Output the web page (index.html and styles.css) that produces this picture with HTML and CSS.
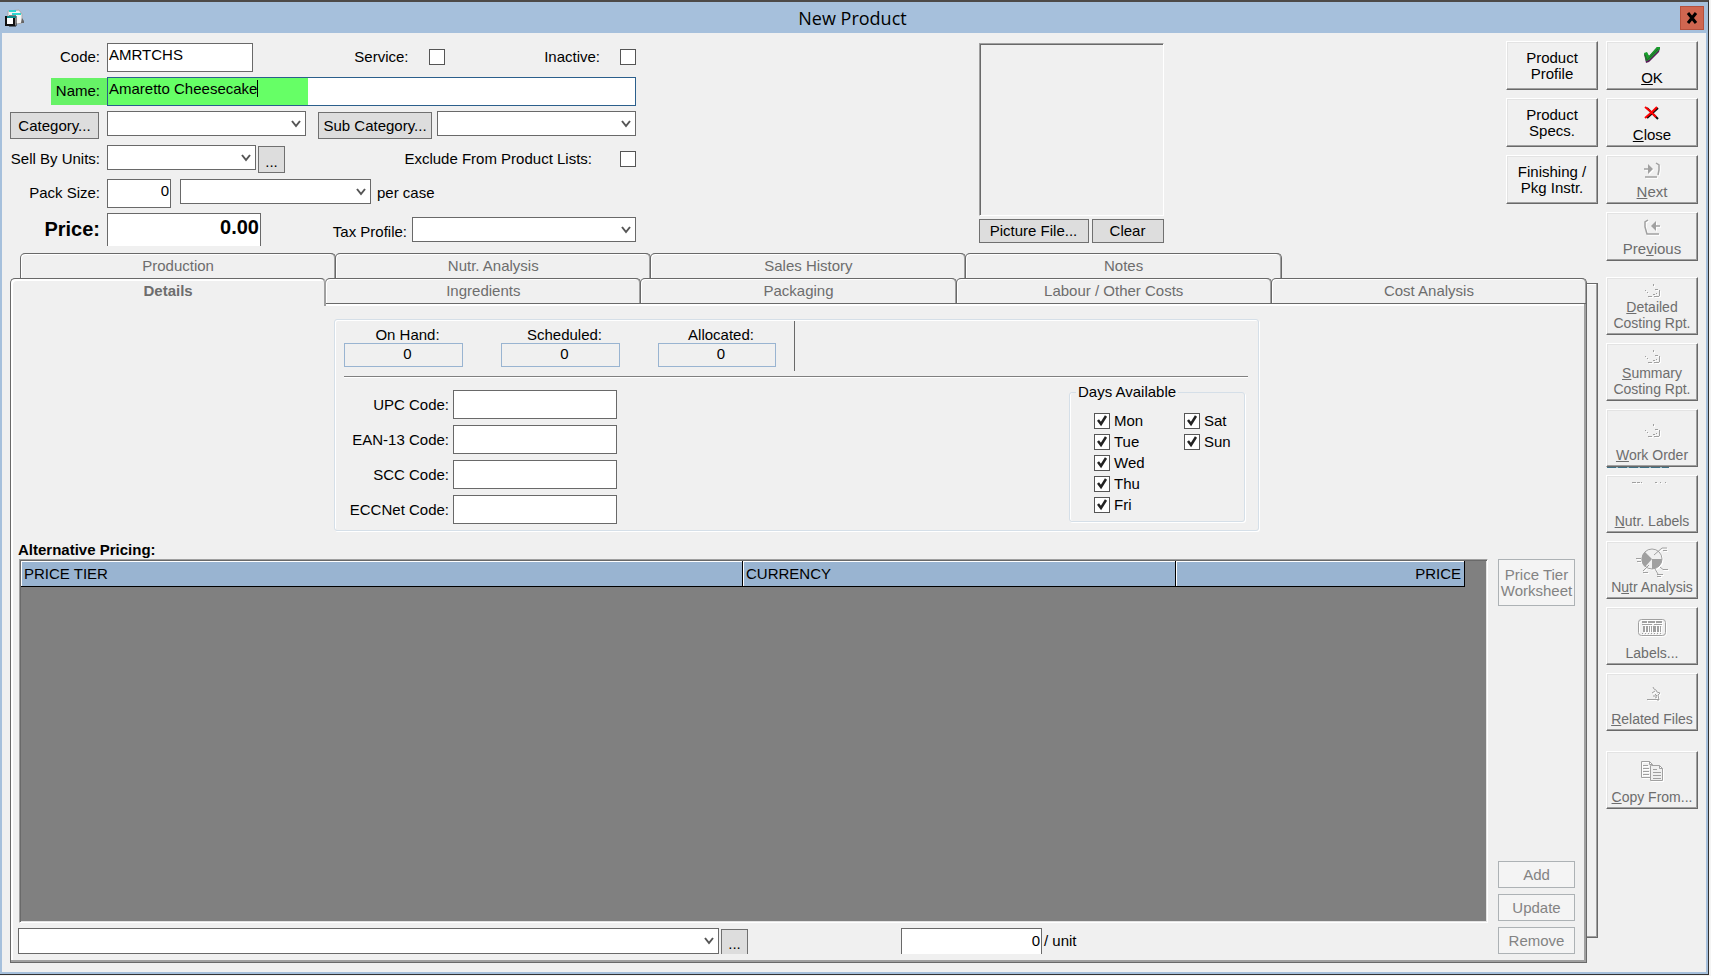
FILE: index.html
```html
<!DOCTYPE html>
<html lang="en">
<head>
  <meta charset="UTF-8">
  <meta name="viewport" content="width=device-width, initial-scale=1.0">
  <title>New Product</title>
  <link rel="stylesheet" href="styles.css">
</head>
<body>
  <div class="window">
    <header class="titlebar">
      <svg class="app-icon" width="20" height="18" viewBox="0 0 20 18">
        <path d="M3 2l11-1 3 4v9l-5 1-9-3z" fill="#f4f4f4" stroke="#a9a9a9"/>
        <path d="M4 2h7M7 5h9" stroke="#2fd5d0" stroke-width="2"/>
        <path d="M17 9l2 3v2h-3z" fill="#666"/>
        <path d="M4 7h7v10H4z" fill="#fff" stroke="#111"/>
        <path d="M1 8h8v8H1z" fill="#fff" stroke="#111" stroke-width="2"/>
        <path d="M2 8h9" stroke="#0b8c8c" stroke-width="2"/>
      </svg>
      <h1>New Product</h1>
      <button class="window-close" aria-label="Close window">
        <svg width="12" height="12" viewBox="0 0 12 12"><path d="M2 1l8 10M10 1L2 11" stroke="#000" stroke-width="3"/></svg>
      </button>
    </header>

    <div class="content">
      <main class="main">
        <div class="top">
          <form class="product-form">
            <div class="row">
              <label class="lead" for="code">Code:</label>
              <input type="text" class="w-code" id="code" value="AMRTCHS">
              <label class="fill" for="service">Service:</label>
              <input type="checkbox" class="gap-check" id="service">
              <label class="fill" for="inactive">Inactive:</label>
              <input type="checkbox" class="gap-check" id="inactive">
            </div>
            <div class="row">
              <label class="lead" for="name"><span class="mark">Name:</span></label>
              <input type="text" class="name" id="name" value="Amaretto Cheesecake">
            </div>
            <div class="row">
              <button type="button" class="btn w-category">Category...</button>
              <select class="w-list" aria-label="Category"><option></option></select>
              <button type="button" class="btn w-sub">Sub Category...</button>
              <select class="w-list" aria-label="Sub Category"><option></option></select>
            </div>
            <div class="row">
              <label class="lead" for="units">Sell By Units:</label>
              <select class="w-units" id="units"><option></option></select>
              <button type="button" class="btn dots">...</button>
              <label class="fill" for="exclude">Exclude From Product Lists:</label>
              <input type="checkbox" class="gap-exclude" id="exclude">
            </div>
            <div class="row">
              <label class="lead" for="pack">Pack Size:</label>
              <input type="text" class="w-pack number" id="pack" value="0">
              <select class="w-case" id="case"><option></option></select>
              <label class="after" for="case">per case</label>
            </div>
            <div class="row">
              <label class="lead price-label" for="price">Price:</label>
              <input type="text" class="price number" id="price" value="0.00">
              <label class="fill tax-label" for="tax">Tax Profile:</label>
              <select class="w-tax" id="tax"><option></option></select>
            </div>
          </form>

          <div class="picture">
            <div class="picture-box"></div>
            <div class="picture-buttons">
              <button class="btn grow">Picture File...</button>
              <button class="btn w-clear">Clear</button>
            </div>
          </div>

          <div class="raised-column">
            <button class="raised">Product<br>Profile</button>
            <button class="raised">Product<br>Specs.</button>
            <button class="raised">Finishing /<br>Pkg Instr.</button>
          </div>
        </div>

        <div class="tab-area">
          <div class="tabs">
            <nav class="tab-row back">
              <button class="tab">Production</button>
              <button class="tab">Nutr. Analysis</button>
              <button class="tab">Sales History</button>
              <button class="tab">Notes</button>
            </nav>
            <nav class="tab-row">
              <button class="tab active">Details</button>
              <button class="tab">Ingredients</button>
              <button class="tab">Packaging</button>
              <button class="tab">Labour / Other Costs</button>
              <button class="tab">Cost Analysis</button>
            </nav>

            <section class="panel">
              <div class="details">
                <div class="stock">
                  <div class="stock-item"><label for="on-hand">On Hand:</label><output id="on-hand">0</output></div>
                  <div class="stock-item"><label for="scheduled">Scheduled:</label><output id="scheduled">0</output></div>
                  <div class="stock-item"><label for="allocated">Allocated:</label><output id="allocated">0</output></div>
                </div>
                <div class="codes-and-days">
                  <div class="codes">
                    <label for="upc">UPC Code:</label><input type="text" id="upc">
                    <label for="ean">EAN-13 Code:</label><input type="text" id="ean">
                    <label for="scc">SCC Code:</label><input type="text" id="scc">
                    <label for="eccnet">ECCNet Code:</label><input type="text" id="eccnet">
                  </div>
                  <fieldset class="days">
                    <legend>Days Available</legend>
                    <label><input type="checkbox" checked>Mon</label>
                    <label><input type="checkbox" checked>Tue</label>
                    <label><input type="checkbox" checked>Wed</label>
                    <label><input type="checkbox" checked>Thu</label>
                    <label><input type="checkbox" checked>Fri</label>
                    <label><input type="checkbox" checked>Sat</label>
                    <label><input type="checkbox" checked>Sun</label>
                  </fieldset>
                </div>
              </div>

              <h2>Alternative Pricing:</h2>
              <div class="pricing">
                <div class="pricing-main">
                  <div class="grid-box">
                    <table>
                      <thead>
                        <tr><th class="col-tier">PRICE TIER</th><th class="col-currency">CURRENCY</th><th class="col-price">PRICE</th></tr>
                      </thead>
                    </table>
                  </div>
                  <div class="entry">
                    <select class="w-tier" aria-label="Price tier"><option></option></select>
                    <button class="btn dots">...</button>
                    <input type="text" class="unit-price number" id="unit-price" value="0">
                    <label for="unit-price">/ unit</label>
                  </div>
                </div>
                <div class="pricing-buttons">
                  <button class="flat worksheet" disabled>Price Tier<br>Worksheet</button>
                  <button class="flat" disabled>Add</button>
                  <button class="flat" disabled>Update</button>
                  <button class="flat" disabled>Remove</button>
                </div>
              </div>
            </section>
          </div>
          <div class="page-edge"></div>
        </div>
      </main>

      <aside class="sidebar">
        <button class="raised">
          <svg width="34" height="24" viewBox="0 0 34 24">
            <path d="M9 8l3-1 2 3 8-9 3 1-1 4-10 10-3 1z" fill="#5a1c5a"/>
            <path d="M9 7l3-1 2 4 8-9h3v2L14 14l-3 1z" fill="#16a02a"/>
            <path d="M10 9l2 5 11-11" fill="none" stroke="#2a5c30"/>
          </svg>
          <span><u>O</u>K</span>
        </button>
        <button class="raised">
          <svg width="34" height="24" viewBox="0 0 34 24">
            <path d="M12 5l11 11M23 5L12 15" stroke="#111" stroke-width="2" fill="none"/>
            <path d="M10 4l5 4 6 6M22 4l-5 5-7 6" stroke="#f00" stroke-width="2" fill="none"/>
          </svg>
          <span><u>C</u>lose</span>
        </button>
        <button class="raised" disabled>
          <svg width="34" height="24" viewBox="0 0 34 24">
            <path d="M9 9h5M21 3l3 2v5l-1 5M10 17h12" stroke="#a0a0a0" stroke-width="1.500" fill="none"/>
            <path d="M13 4l5 5-5 5z" fill="#a0a0a0"/>
          </svg>
          <span><u>N</u>ext</span>
        </button>
        <button class="raised" disabled>
          <svg width="34" height="24" viewBox="0 0 34 24">
            <path d="M25 9h-5M13 3l-3 2v5l2 7h12" stroke="#a0a0a0" stroke-width="1.500" fill="none"/>
            <path d="M21 4l-5 5 5 5z" fill="#a0a0a0"/>
          </svg>
          <span>Pre<u>v</u>ious</span>
        </button>

        <button class="raised tall section" disabled>
          <svg width="34" height="16" viewBox="0 0 34 16">
            <path d="M18.500 1v2M10 7.500h1M12 9.500h1M20 6.500h3M24.500 7v6M18 11.500h2M13 13.500h4M19 13.500h5M21 10.500h1" stroke="#a0a0a0" fill="none"/>
          </svg>
          <span><u>D</u>etailed<br>Costing Rpt.</span>
        </button>
        <button class="raised tall" disabled>
          <svg width="34" height="16" viewBox="0 0 34 16">
            <path d="M18.500 1v2M10 7.500h1M12 9.500h1M20 6.500h3M24.500 7v6M18 11.500h2M13 13.500h4M19 13.500h5M21 10.500h1" stroke="#a0a0a0" fill="none"/>
          </svg>
          <span><u>S</u>ummary<br>Costing Rpt.</span>
        </button>
        <button class="raised tall leftover" disabled>
          <svg width="34" height="32" viewBox="0 0 34 32">
            <path d="M18.500 9v2M10 15.500h1M12 17.500h1M20 14.500h3M24.500 15v6M18 19.500h2M13 21.500h4M19 21.500h5M21 18.500h1" stroke="#a0a0a0" fill="none"/>
          </svg>
          <span><u>W</u>ork Order</span>
        </button>
        <button class="raised tall" disabled>
          <svg width="40" height="32" viewBox="0 0 40 32">
            <path d="M0 1.500h4M5 1.500h3M9 1.500h1M23 1.500h2M28 1.500h1M33 1.500h1" stroke="#a0a0a0" fill="none"/>
          </svg>
          <span><u>N</u>utr. Labels</span>
        </button>
        <button class="raised tall" disabled>
          <svg width="34" height="32" viewBox="0 0 34 32">
            <circle cx="17" cy="12" r="10" fill="#f0f0f0" stroke="#a0a0a0"/>
            <path d="M17 12L10 5a10 10 0 0 0 0 15zM17 12h10a10 10 0 0 1-10 10z" fill="#a0a0a0"/>
            <path d="M19 8l8-7h5M28 3.500h4M1 11.500h5M2 14.500h4M14 18l-6 6M8 25.500h5M25 20l3 2.500h5M20 22l3 5M22 27.500h6M22 29.500h4" stroke="#a0a0a0" fill="none"/>
          </svg>
          <span>N<u>u</u>tr Analysis</span>
        </button>
        <button class="raised tall" disabled>
          <svg width="34" height="32" viewBox="0 0 34 32">
            <rect x="3.500" y="6.500" width="27" height="16" rx="3" fill="none" stroke="#a0a0a0"/>
            <path d="M7 9h5M13 9h7M21 9h6" stroke="#a0a0a0" stroke-width="2"/>
            <path d="M7 11.500h10M19 11.500h8M7 20.500h1M10 20.500h1M13 20.500h1M16 20.500h1M19 20.500h1M22 20.500h1M25 20.500h1" stroke="#a0a0a0"/>
            <path d="M9 13v6M12 13v6M20 13v6M23 13v6" stroke="#a0a0a0" stroke-width="2"/>
            <path d="M14.500 13v6M16.500 13v6M18.500 13v6M25.500 13v6" stroke="#a0a0a0"/>
          </svg>
          <span>Labels...</span>
        </button>
        <button class="raised tall" disabled>
          <svg width="34" height="32" viewBox="0 0 34 32">
            <path d="M18 8l1 2 2 1 1 2 3 1-2 2 1 5h-2M17 14l3-2M18 17h4l-2-2M20 19l2-1M12 20.500h12" stroke="#a0a0a0" fill="none"/>
          </svg>
          <span><u>R</u>elated Files</span>
        </button>
        <button class="raised tall copy" disabled>
          <svg width="34" height="32" viewBox="0 0 34 32">
            <path d="M6.500 4.500h8l3 3v13h-11zM14.500 4.500v3h3M8 8.500h5M8 11.500h6M8 14.500h6M8 17.500h6" fill="none" stroke="#a0a0a0"/>
            <path d="M16.500 8.500h8l3 3v12h-12v-15zM24.500 8.500v3h3" fill="#f0f0f0" stroke="#a0a0a0"/>
            <path d="M18 12.500h4M18 15.500h8M18 18.500h8M18 21.500h8" stroke="#a0a0a0"/>
          </svg>
          <span><u>C</u>opy From...</span>
        </button>
      </aside>
    </div>
  </div>
</body>
</html>
```
FILE: styles.css
```css
* {
  box-sizing: border-box;
}
body {
  margin: 0;
  background: #f4f4f4;
  color: #000;
  font: 15px/16px "Liberation Sans", Arial, sans-serif;
}
button, input, select {
  font: inherit;
  color: inherit;
  margin: 0;
  border-radius: 0;
}
button {
  padding: 0;
}

/* window frame */
.window {
  display: flex;
  flex-direction: column;
  min-height: calc(100vh - 1px);
  margin-right: 2px;
  border: 1px solid #333;
  border-top: 2px solid #4d4a48;
  border-left: 0;
  background: #f0f0f0;
}
.titlebar {
  display: flex;
  align-items: center;
  height: 31px;
  padding: 0 4px 0 5px;
  background: #a6c0dc;
}
.titlebar h1 {
  flex: 1;
  margin: 0;
  font: 18px/30px "Open Sans", "Noto Sans", sans-serif;
  text-align: center;
}
.window-close {
  display: flex;
  align-items: center;
  justify-content: center;
  width: 24px;
  height: 24px;
  border: 1px solid #b5503c;
  background: #cf6650;
}
.content {
  flex: 1;
  display: flex;
  gap: 8px;
  padding: 8px 8px 9px;
  border: 2px solid #a6c0dc;
  border-top: 0;
}
.main {
  flex: 1;
  display: flex;
  flex-direction: column;
  min-width: 0;
}
.top {
  display: flex;
  justify-content: space-between;
  height: 212px;
}

/* text boxes and lists */
input[type="text"] {
  height: 29px;
  padding: 0 1px 7px;
  border: 1px solid #696969;
  background: #fff;
}
input.number {
  text-align: right;
}
select {
  appearance: none;
  height: 25px;
  border: 1px solid #696969;
  background: #fff url("data:image/svg+xml,%3Csvg xmlns='http://www.w3.org/2000/svg' width='10' height='8'%3E%3Cpath d='M1 1l4 5 4-5' fill='none' stroke='%23555' stroke-width='2'/%3E%3C/svg%3E") no-repeat right 4px center;
}
input[type="checkbox"] {
  appearance: none;
  flex: none;
  width: 16px;
  height: 16px;
  border: 1px solid #555;
  background: #fff;
}
input[type="checkbox"]:checked {
  background: #fff url("data:image/svg+xml,%3Csvg xmlns='http://www.w3.org/2000/svg' width='14' height='14'%3E%3Cpath d='M3 6l3 4 5-8' fill='none' stroke='%23222' stroke-width='2.5'/%3E%3C/svg%3E");
}

/* buttons */
.btn {
  border: 1px solid #707070;
  background: #ddd;
}
.raised {
  display: flex;
  flex-direction: column;
  align-items: center;
  justify-content: center;
  width: 92px;
  height: 49px;
  border: 1px solid;
  border-color: #fff #696969 #696969 #fff;
  background: #f0f0f0;
  box-shadow: inset -1px -1px #a0a0a0, inset 1px 1px #e3e3e3;
}
.raised:disabled {
  color: #6d6d6d;
}
.raised:disabled svg {
  filter: drop-shadow(1px 1px 0 #fff);
}
.flat {
  height: 27px;
  border: 1px solid #adb2b5;
  background: #f4f4f4;
  color: #838383;
}

/* product form */
.product-form {
  width: 626px;
  padding-top: 2px;
}
.row {
  display: flex;
  align-items: flex-start;
  height: 34px;
}
.row label {
  padding-top: 4px;
  line-height: 20px;
  white-space: nowrap;
}
.row .lead {
  width: 97px;
  padding-right: 7px;
  text-align: right;
}
.row .fill {
  flex: 1;
  text-align: right;
}
.row .after {
  padding-left: 6px;
}
.row .btn {
  height: 27px;
  margin-top: 1px;
}
.row input[type="checkbox"] {
  margin-top: 6px;
}
.row .gap-check {
  margin-left: 20px;
}
.row .gap-exclude {
  margin-left: 28px;
}
.row .lead:has(.mark) {
  padding: 1px 0 0;
}
.mark {
  display: inline-block;
  padding: 3px 7px 4px 5px;
  background: #66f266;
}
input.name {
  width: 529px;
  border-color: #2b5f8c;
  background: linear-gradient(#000, #000) 149px 2px / 1px 17px no-repeat, linear-gradient(90deg, #66ff66 200px, #fff 200px);
}
.w-code {
  width: 146px;
}
.w-category {
  width: 89px;
  margin-right: 8px;
}
.w-list {
  width: 199px;
}
.w-sub {
  width: 114px;
  margin: 0 5px 0 12px;
}
.w-units {
  width: 149px;
}
.btn.dots {
  width: 27px;
  margin-left: 2px;
  padding-top: 4px;
}
.w-pack {
  width: 64px;
}
.w-case {
  width: 191px;
  margin-left: 9px;
}
.row .price-label {
  padding-top: 6px;
  font-size: 20px;
  font-weight: bold;
}
.row .price {
  width: 154px;
  height: 33px;
  padding-bottom: 5px;
  border-bottom: 0;
  font-size: 20px;
  font-weight: bold;
}
.row .tax-label {
  padding-top: 9px;
}
.w-tax {
  width: 224px;
  margin: 4px 0 0 5px;
}

/* picture */
.picture {
  width: 185px;
  padding-top: 2px;
}
.picture-box {
  height: 173px;
  margin-bottom: 3px;
  border: 1px solid;
  border-color: #a0a0a0 #fff #fff #a0a0a0;
  box-shadow: inset 1px 1px #696969;
}
.picture-buttons {
  display: flex;
  gap: 3px;
  height: 24px;
}
.grow {
  flex: 1;
}
.w-clear {
  width: 72px;
}
.raised-column {
  display: flex;
  flex-direction: column;
  gap: 8px;
}

/* tabs */
.tab-area {
  flex: 1;
  display: flex;
}
.tabs {
  flex: 1;
  display: flex;
  flex-direction: column;
}
.page-edge {
  width: 11px;
  margin: 30px 0 25px;
  border: 1px solid #696969;
  border-left: 0;
  box-shadow: inset -1px -1px #a0a0a0, inset 0 1px #fff;
}
.tab-row {
  display: flex;
  height: 25px;
}
.tab-row.back {
  width: 80%;
  margin-left: 10px;
}
.tab {
  flex: 1;
  margin-left: -1px;
  border: 1px solid #696969;
  border-bottom: 0;
  border-radius: 5px 5px 0 0;
  background: #f0f0f0;
  box-shadow: inset -1px 0 #a0a0a0, inset 1px 1px #fff;
  color: #6d6d6d;
}
.tab:first-child {
  margin-left: 0;
}
.tab.active {
  z-index: 1;
  margin-bottom: -3px;
  padding-bottom: 4px;
  border-right-color: #a0a0a0;
  box-shadow: inset -1px 0 #a0a0a0, inset 2px 2px #fff;
  font-weight: bold;
}
.panel {
  flex: 1;
  display: flex;
  flex-direction: column;
  padding: 15px 11px 8px 7px;
  border: 1px solid #696969;
  box-shadow: inset -2px -2px #a0a0a0, inset 2px 2px #fff;
}

/* details group */
.details {
  width: 925px;
  height: 212px;
  margin: 0 auto;
  padding: 1px 10px 0 9px;
  border: 1px solid #d5dfe8;
  border-radius: 3px;
  box-shadow: inset 1px 1px #fff, 1px 1px #fff;
}
.stock {
  display: flex;
  gap: 38px;
  height: 56px;
  border-bottom: 1px solid #808080;
  box-shadow: 0 1px #fff;
}
.stock-item {
  width: 119px;
  padding-top: 5px;
  text-align: center;
}
.stock-item:last-child {
  width: 137px;
  height: 50px;
  padding-right: 18px;
  border-right: 1px solid #696969;
}
.stock-item label {
  display: block;
  padding-left: 8px;
  line-height: 17px;
}
.stock-item output {
  display: block;
  height: 24px;
  padding-left: 8px;
  border: 1px solid #99b4d1;
  line-height: 20px;
}
.codes-and-days {
  display: flex;
  justify-content: space-between;
}
.codes {
  display: grid;
  grid-template-columns: 105px 164px;
  column-gap: 4px;
  row-gap: 6px;
  align-content: start;
  align-items: center;
  padding-top: 13px;
  text-align: right;
}
.days {
  display: grid;
  grid-template-rows: repeat(5, 16px);
  grid-auto-flow: column;
  grid-template-columns: 90px 60px;
  row-gap: 5px;
  width: 176px;
  height: 138px;
  margin: 7px 3px 0 0;
  padding: 13px 0 0 24px;
  border: 1px solid #d5dfe8;
  border-radius: 3px;
  box-shadow: inset 1px 0 #fff, 1px 1px #fff;
}
.days legend {
  margin-left: -18px;
  padding: 0 2px;
}
.days label {
  display: flex;
  align-items: center;
  gap: 4px;
}

/* alternative pricing */
.panel h2 {
  margin: 10px 0 1px;
  font-size: 15px;
  line-height: 17px;
}
.pricing {
  flex: 1;
  display: flex;
  gap: 10px;
}
.pricing-main {
  flex: 1;
  display: flex;
  flex-direction: column;
}
.grid-box {
  flex: 1;
  margin: 0 0 5px 1px;
  border: 1px solid;
  border-color: #a0a0a0 #fff #fff #a0a0a0;
  background: #808080;
  box-shadow: inset 1px 1px #696969, inset -1px -1px #e3e3e3;
  padding: 1px;
}
table {
  width: calc(100% - 21px);
  border-collapse: separate;
  border-spacing: 0;
  table-layout: fixed;
}
th {
  height: 26px;
  padding: 0 3px;
  border-right: 1px solid #000;
  border-bottom: 1px solid #000;
  background: #99b4d1;
  box-shadow: inset 1px 1px #fff;
  font-weight: normal;
  text-align: left;
}
.col-tier {
  width: 50%;
}
.col-currency {
  width: 30%;
}
.col-price {
  width: 20%;
  text-align: right;
}
.entry {
  display: flex;
  height: 26px;
}
.entry select {
  height: 26px;
}
.w-tier {
  width: 701px;
}
.entry .dots {
  margin-top: 1px;
  border-bottom: 0;
}
.entry .unit-price {
  width: 141px;
  height: 26px;
  margin-left: 153px;
  padding-bottom: 3px;
  border-bottom: 0;
}
.entry label {
  padding-left: 2px;
  line-height: 25px;
}
.pricing-buttons {
  display: flex;
  flex-direction: column;
  gap: 6px;
  width: 77px;
}
.worksheet {
  height: 47px;
  margin-bottom: auto;
}

/* right-hand commands */
.sidebar {
  display: flex;
  flex-direction: column;
  gap: 8px;
}
.sidebar .raised {
  justify-content: flex-end;
  padding-bottom: 3px;
}
.sidebar .tall {
  height: 58px;
  font-size: 14px;
}
.sidebar .section {
  margin-top: 8px;
}
.sidebar .copy {
  margin-top: 12px;
}
.sidebar .leftover {
  position: relative;
}
.leftover::after {
  content: "";
  position: absolute;
  left: 0;
  bottom: -2px;
  width: 62px;
  height: 1px;
  background: repeating-linear-gradient(90deg, #3f7186 0 9px, #9fc0cc 9px 11px);
}
```
